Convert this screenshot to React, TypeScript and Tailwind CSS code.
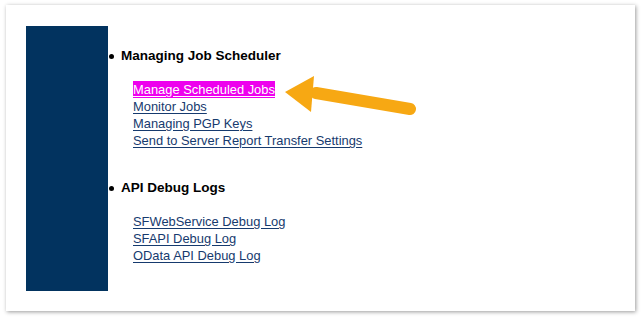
import React from 'react'

const jobLinks = [
  'Manage Scheduled Jobs',
  'Monitor Jobs',
  'Managing PGP Keys',
  'Send to Server Report Transfer Settings',
]

const debugLinks = ['SFWebService Debug Log', 'SFAPI Debug Log', 'OData API Debug Log']

function Section({ title, links, highlight }: { title: string; links: string[]; highlight?: number }) {
  return (
    <div>
      <div className="flex items-center h-[17px]">
        <span className="w-[5px] h-[5px] rounded-full bg-black ml-[1px] mr-[7px]"></span>
        <span className="font-bold text-[13.5px] text-black">{title}</span>
      </div>
      <div className="pl-[25px] mt-[15px]">
        {links.map((l, i) => (
          <div key={l} className="h-[17px] leading-[17px]">
            <a
              href="#"
              className={`text-[12.9px] underline underline-offset-[2px] ${
                i === highlight ? 'bg-[#ee00ee] text-white py-[1px]' : 'text-[#163a6e]'
              }`}
            >
              {l}
            </a>
          </div>
        ))}
      </div>
    </div>
  )
}

export default function App() {
  return (
    <div className="w-[641px] h-[317px] bg-white pt-[5px] pl-[6px]" style={{ fontFamily: '"Liberation Sans", Arial, sans-serif' }}>
      <div className="relative w-[629px] h-[306px] bg-white shadow-[1px_1px_4px_rgba(0,0,0,0.4)] flex pt-[21px] pl-[20px]">
        <div className="w-[82px] h-[265px] bg-[#02335f]"></div>

        <div className="pt-[22px] flex flex-col gap-[32px]">
          <Section title="Managing Job Scheduler" links={jobLinks} highlight={0} />
          <Section title="API Debug Logs" links={debugLinks} />
        </div>

        {/* arrow annotation */}
        <svg className="absolute left-[276px] top-[68px]" width="140" height="46" viewBox="0 0 140 46">
          <line x1="34" y1="20" x2="128" y2="36" stroke="#f7a813" strokeWidth="12" strokeLinecap="round" />
          <polygon points="3,19 32,3 29,39" fill="#f7a813" />
        </svg>
      </div>
    </div>
  )
}
